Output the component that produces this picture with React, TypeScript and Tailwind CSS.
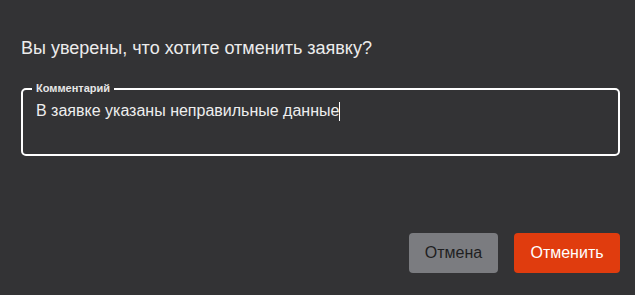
import React from "react";

export default function App() {
  return (
    <div
      className="w-[635px] h-[295px] bg-[#333335] pl-[21px] pr-[15px] pt-[36px] flex flex-col"
      style={{ fontFamily: '"Liberation Sans", Arial, sans-serif' }}
    >
      <h2 className="text-[18px] leading-[24px] text-[#ececec]">
        Вы уверены, что хотите отменить заявку?
      </h2>
      <div className="relative mt-[28px] h-[68px] border-2 border-white rounded-[5px] pl-[13px] pt-[11px]">
        <span className="absolute -top-[9px] left-[9px] px-[4px] bg-[#333335] text-[11px] leading-[14px] font-bold text-[#e6e6e6]">
          Комментарий
        </span>
        <div className="flex items-center text-[16px] leading-[20px] text-[#eeeeee]">
          <span>В заявке указаны неправильные данные</span>
          <span className="inline-block w-px h-[19px] bg-white" />
        </div>
      </div>
      <div className="mt-[77px] flex justify-end gap-[16px]">
        <button className="h-[40px] w-[89px] rounded-[4px] bg-[#7b7c80] text-[16px] text-[#1f1f22]">
          Отмена
        </button>
        <button className="h-[40px] w-[106px] rounded-[4px] bg-[#e03c0e] text-[16px] text-white">
          Отменить
        </button>
      </div>
    </div>
  );
}
